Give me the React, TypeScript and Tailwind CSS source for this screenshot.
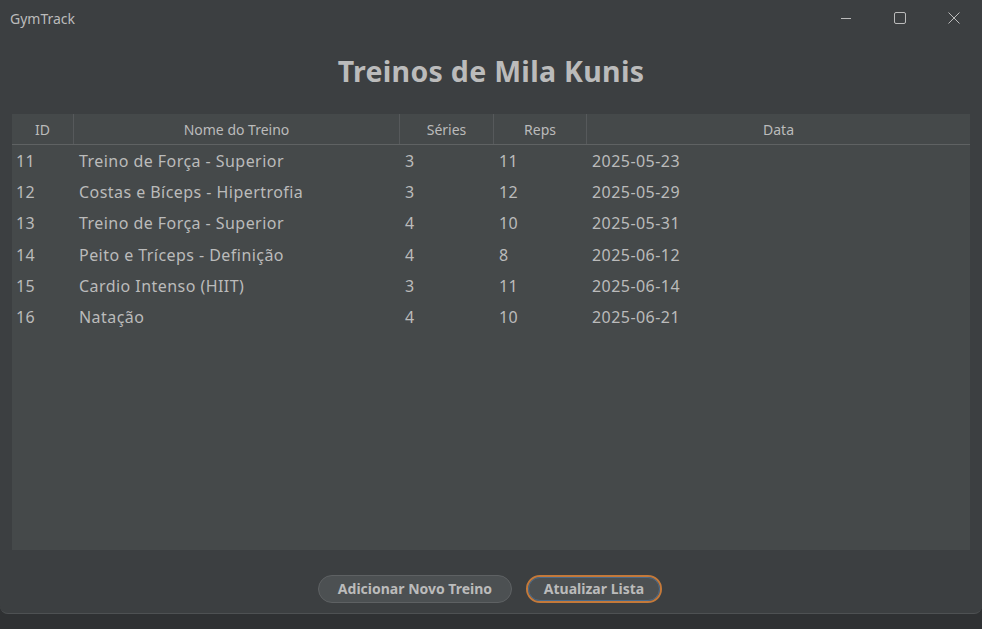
import React from 'react';

const treinos = [
  { id: 11, nome: 'Treino de Força - Superior', series: 3, reps: 11, data: '2025-05-23' },
  { id: 12, nome: 'Costas e Bíceps - Hipertrofia', series: 3, reps: 12, data: '2025-05-29' },
  { id: 13, nome: 'Treino de Força - Superior', series: 4, reps: 10, data: '2025-05-31' },
  { id: 14, nome: 'Peito e Tríceps - Definição', series: 4, reps: 8, data: '2025-06-12' },
  { id: 15, nome: 'Cardio Intenso (HIIT)', series: 3, reps: 11, data: '2025-06-14' },
  { id: 16, nome: 'Natação', series: 4, reps: 10, data: '2025-06-21' },
];

const cols = ['w-[62px]', 'w-[326px]', 'w-[94px]', 'w-[93px]', 'flex-1'];
const headers = ['ID', 'Nome do Treino', 'Séries', 'Reps', 'Data'];

const App: React.FC = () => {
  return (
    <div className="w-[982px] h-[629px] bg-[#2f3133] flex flex-col font-['Noto_Sans','Open_Sans',sans-serif] text-[#bbbbbb] overflow-hidden">
      <div className="h-[614px] bg-[#3c3f41] rounded-b-[8px] border-b border-[#4e5153] flex flex-col">
        {/* Title bar */}
        <div className="h-[36px] flex items-center justify-between">
          <span className="pl-[10px] text-[14px] text-[#bbbbbb]">GymTrack</span>
          <div className="flex h-full items-center text-[#bbbbbb]">
            <div className="w-[56px] flex justify-center">
              <svg width="12" height="12" viewBox="0 0 12 12"><path d="M1 6.5h10" stroke="currentColor" strokeWidth="1" /></svg>
            </div>
            <div className="w-[52px] flex justify-center">
              <svg width="12" height="12" viewBox="0 0 12 12"><rect x="0.5" y="0.5" width="11" height="11" rx="1.5" fill="none" stroke="currentColor" strokeWidth="1" /></svg>
            </div>
            <div className="w-[56px] flex justify-center">
              <svg width="14" height="14" viewBox="0 0 14 14"><path d="M1.5 1.5l11 11M12.5 1.5l-11 11" stroke="currentColor" strokeWidth="1" /></svg>
            </div>
          </div>
        </div>

        {/* Heading */}
        <div className="h-[78px] flex items-center justify-center">
          <h1 className="text-[28.5px] font-bold text-[#bbbbbb] -mt-[8px] tracking-[0.3px]">Treinos de Mila Kunis</h1>
        </div>

        {/* Table */}
        <div className="mx-[12px] h-[436px] bg-[#45494a] flex flex-col">
          <div className="flex h-[31px] border-b border-[#5f6263] text-[14px]">
            {headers.map((h, i) => (
              <div
                key={h}
                className={`${cols[i]} flex items-center justify-center ${i < headers.length - 1 ? 'border-r border-[#56595b]' : ''}`}
              >
                {h}
              </div>
            ))}
          </div>
          {treinos.map((t) => (
            <div key={t.id} className="flex h-[31.3px] items-center text-[16px] tracking-[0.45px]">
              <div className={`${cols[0]} pl-[4px]`}>{t.id}</div>
              <div className={`${cols[1]} pl-[5px]`}>{t.nome}</div>
              <div className={`${cols[2]} pl-[5px]`}>{t.series}</div>
              <div className={`${cols[3]} pl-[5px]`}>{t.reps}</div>
              <div className={`${cols[4]} pl-[5px]`}>{t.data}</div>
            </div>
          ))}
        </div>

        {/* Buttons */}
        <div className="flex-1 flex items-center justify-center gap-[14px] pt-[14px]">
          <button className="h-[28px] w-[194px] rounded-full bg-[#4c5052] border border-[#5e6163] text-[14px] font-bold text-[#bbbbbb] -ml-[2px]">
            Adicionar Novo Treino
          </button>
          <button className="h-[28px] w-[136px] rounded-full bg-[#4c5052] border-2 border-[#c4793a] outline outline-1 outline-[#4a6a8a] -outline-offset-[3px] text-[14px] font-bold text-[#bbbbbb]">
            Atualizar Lista
          </button>
        </div>
      </div>
    </div>
  );
};

export default App;
